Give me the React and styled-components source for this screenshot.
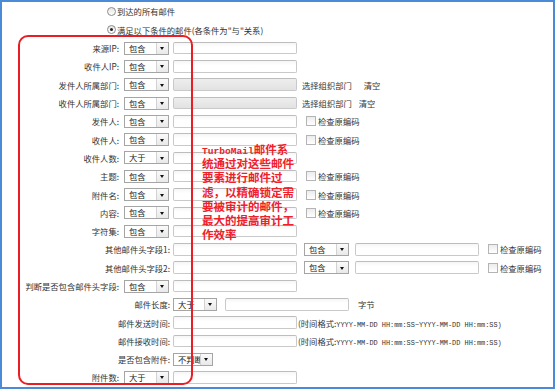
import styled, { createGlobalStyle } from "styled-components";

const GlobalStyle = createGlobalStyle`
  html, body {
    margin: 0;
    padding: 0;
    background: #fff;
  }
  body {
    font-family: "Noto Sans CJK SC", "Noto Sans", sans-serif;
    font-size: 8.3px;
    color: #333;
  }
`;

const rows = [
  { label: "来源IP", select: "包含", input: true },
  { label: "收件人IP", select: "包含", input: true },
  { label: "发件人所属部门", select: "包含", input: "grey", org: 12 },
  { label: "收件人所属部门", select: "包含", input: "grey", org: 7 },
  { label: "发件人", select: "包含", input: true, check: true },
  { label: "收件人", select: "包含", input: true, check: true },
  { label: "收件人数", select: "大于", input: true },
  { label: "主题", select: "包含", input: true, check: true },
  { label: "附件名", select: "包含", input: true, check: true },
  { label: "内容", select: "包含", input: true, check: true },
  { label: "字符集", select: "包含", input: true },
];

const noteLines = [
  "统通过对这些邮件",
  "要素进行邮件过",
  "滤，以精确锁定需",
  "要被审计的邮件，",
  "最大的提高审计工",
  "作效率",
];

export default function App() {
  return (
    <>
      <GlobalStyle />
      <Frame>
        <RadioRow>
          <Radio />
          <span>到达的所有邮件</span>
        </RadioRow>
        <RadioRow>
          <Radio $checked />
          <span>满足以下条件的邮件(各条件为"与"关系)</span>
        </RadioRow>

        {rows.map((r) => (
          <Row key={r.label}>
            <Label $w={120}>{r.label}:</Label>
            <Select $w={45} $ml={2}>{r.select}</Select>
            <TextBox $ml={4} $grey={r.input === "grey"} />
            {r.org && (
              <>
                <Link $ml={5}>选择组织部门</Link>
                <Link $ml={r.org}>清空</Link>
              </>
            )}
            {r.check && (
              <CheckField $ml={9}>
                <CheckBox />
                检查原编码
              </CheckField>
            )}
          </Row>
        ))}

        {["其他邮件头字段1", "其他邮件头字段2"].map((l) => (
          <Row key={l}>
            <Label $w={171}>{l}:</Label>
            <TextBox />
            <Select $w={45} $ml={7}>包含</Select>
            <TextBox $ml={6} />
            <CheckField $ml={9}>
              <CheckBox />
              检查原编码
            </CheckField>
          </Row>
        ))}

        <Row>
          <Label $w={120}>判断是否包含邮件头字段:</Label>
          <Select $w={45} $ml={2}>包含</Select>
          <TextBox $ml={4} />
        </Row>

        <Row>
          <Label $w={171}>邮件长度:</Label>
          <Select $w={44}>大于</Select>
          <TextBox $ml={8} />
          <Link $ml={9}>字节</Link>
        </Row>

        {["邮件发送时间", "邮件接收时间"].map((l) => (
          <Row key={l}>
            <Label $w={171}>{l}:</Label>
            <TextBox />
            <Hint>
              (时间格式:<Mono>YYYY-MM-DD HH:mm:SS~YYYY-MM-DD HH:mm:SS)</Mono>
            </Hint>
          </Row>
        ))}

        <Row>
          <Label $w={171}>是否包含附件:</Label>
          <Select $w={40}>不判断</Select>
        </Row>

        <Row>
          <Label $w={120}>附件数:</Label>
          <Select $w={45} $ml={2}>大于</Select>
          <TextBox $ml={4} />
        </Row>

        <Annotation />
        <Note>
          <NoteLine>
            <NoteMono>TurboMail</NoteMono>邮件系
          </NoteLine>
          {noteLines.map((t) => (
            <NoteLine key={t}>{t}</NoteLine>
          ))}
        </Note>
      </Frame>
    </>
  );
}

const Frame = styled.div`
  position: relative;
  box-sizing: border-box;
  width: 555px;
  height: 389px;
  border: 2px solid #4a8ad6;
  overflow: hidden;
`;

const RadioRow = styled.div`
  display: flex;
  align-items: center;
  height: 18.5px;
  padding-left: 105px;
  gap: 1px;
  white-space: nowrap;
`;

const Radio = styled.span`
  position: relative;
  box-sizing: border-box;
  width: 9px;
  height: 9px;
  border-radius: 50%;
  border: 1px solid #8c8c8c;
  background: linear-gradient(#e4e4e4, #ffffff);

  &::after {
    content: "";
    display: ${(p) => (p.$checked ? "block" : "none")};
    position: absolute;
    left: 2px;
    top: 2px;
    width: 3px;
    height: 3px;
    border-radius: 50%;
    background: #222;
  }
`;

const Row = styled.div`
  display: flex;
  align-items: center;
  height: 18.3px;
  white-space: nowrap;
`;

const Label = styled.div`
  box-sizing: border-box;
  width: ${(p) => p.$w}px;
  padding-right: 3px;
  text-align: right;
  color: #333;
`;

const Select = styled.div`
  position: relative;
  box-sizing: border-box;
  flex: none;
  width: ${(p) => p.$w}px;
  height: 13px;
  margin-left: ${(p) => p.$ml || 0}px;
  padding-left: 4px;
  border: 1px solid #a5a5a5;
  background: #fff;
  line-height: 11px;
  color: #222;

  &::before {
    content: "";
    position: absolute;
    right: 0;
    top: 0;
    bottom: 0;
    width: 11px;
    border-left: 1px solid #d2d2d2;
    background: linear-gradient(#fafafa, #e9e9e9);
  }

  &::after {
    content: "";
    position: absolute;
    right: 4px;
    top: 4.5px;
    border-left: 2.5px solid transparent;
    border-right: 2.5px solid transparent;
    border-top: 3px solid #111;
  }
`;

const TextBox = styled.div`
  box-sizing: border-box;
  flex: none;
  width: 124px;
  height: 12.5px;
  margin-left: ${(p) => p.$ml || 0}px;
  border: 1px solid #c9c9c9;
  border-top-color: #bdbdbd;
  border-radius: 2px;
  background: ${(p) =>
    p.$grey ? "linear-gradient(#eeeeee, #e2e2e2)" : "linear-gradient(#f6f6f6, #ffffff 40%)"};
`;

const Link = styled.span`
  margin-left: ${(p) => p.$ml || 0}px;
  color: #333;
`;

const CheckField = styled.label`
  display: flex;
  align-items: center;
  gap: 2px;
  margin-left: ${(p) => p.$ml || 0}px;
  color: #333;
`;

const CheckBox = styled.span`
  box-sizing: border-box;
  width: 10px;
  height: 10px;
  border: 1px solid #b4b4b4;
  background: linear-gradient(#ececec, #ffffff);
`;

const Hint = styled.span`
  margin-left: 1px;
  color: #333;
`;

const Mono = styled.span`
  font-family: "Liberation Mono", "DejaVu Sans Mono", monospace;
  font-size: 6.9px;
`;

const Annotation = styled.div`
  position: absolute;
  left: 16px;
  top: 33px;
  width: 175px;
  height: 350px;
  box-sizing: border-box;
  border: 2.5px solid #ea1c24;
  border-radius: 10px;
  pointer-events: none;
`;

const Note = styled.div`
  position: absolute;
  left: 200px;
  top: 140px;
  display: flex;
  flex-direction: column;
  font-size: 11.5px;
  font-weight: 700;
  color: #f0202a;
  white-space: nowrap;
`;

const NoteLine = styled.div`
  height: 14.2px;
  line-height: 14.2px;
`;

const NoteMono = styled.span`
  font-family: "Liberation Mono", monospace;
  font-size: 9.6px;
  line-height: 0;
`;
